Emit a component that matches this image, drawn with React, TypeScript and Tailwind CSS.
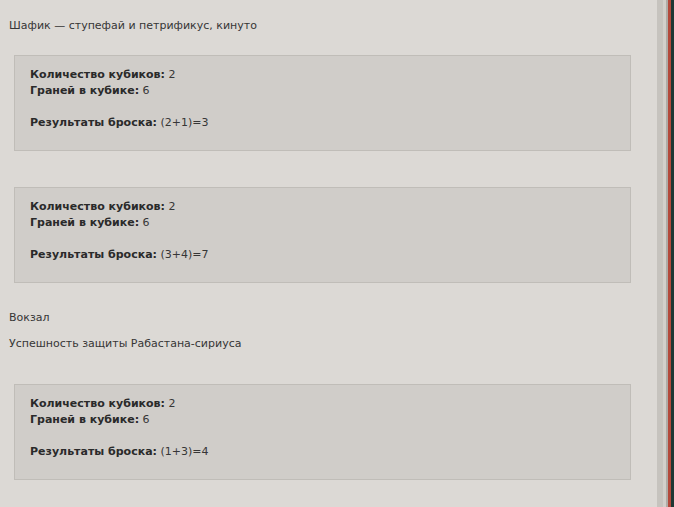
import React from "react";

type Roll = { dice: number; faces: number; result: string };

function RollBox({ roll, className }: { roll: Roll; className?: string }) {
  return (
    <div
      className={`ml-[14px] w-[617px] h-[96px] border border-[#c0bdb8] bg-[#d0cdc9] pl-[15px] pt-[11px] ${className ?? ""}`}
    >
      <div className="leading-[16px]">
        <b className="font-bold text-[#2a2a2a]">Количество кубиков:</b> {roll.dice}
      </div>
      <div className="leading-[16px]">
        <b className="font-bold text-[#2a2a2a]">Граней в кубике:</b> {roll.faces}
      </div>
      <div className="h-[16px]" />
      <div className="leading-[16px]">
        <b className="font-bold text-[#2a2a2a]">Результаты броска:</b> {roll.result}
      </div>
    </div>
  );
}

export default function App() {
  return (
    <div
      className="flex h-[507px] w-[674px] overflow-hidden bg-[#dcd9d5] text-[11px] text-[#363636]"
      style={{ fontFamily: '"DejaVu Sans", Verdana, sans-serif' }}
    >
      <div className="w-[657px] shrink-0">
        <p className="mt-[18px] pl-[9px] leading-[16px]">Шафик — ступефай и петрификус, кинуто</p>
        <RollBox className="mt-[21px]" roll={{ dice: 2, faces: 6, result: "(2+1)=3" }} />
        <RollBox className="mt-[36px]" roll={{ dice: 2, faces: 6, result: "(3+4)=7" }} />
        <p className="mt-[27px] pl-[9px] leading-[16px]">Вокзал</p>
        <p className="mt-[10px] pl-[9px] leading-[16px]">Успешность защиты Рабастана-сириуса</p>
        <RollBox className="mt-[32px]" roll={{ dice: 2, faces: 6, result: "(1+3)=4" }} />
      </div>
      <div className="flex shrink-0">
        <div className="w-[6px] bg-[#c6c3be]" />
        <div className="w-[3px] bg-[#d3d0cb]" />
        <div className="w-[2px] bg-[#afaca7]" />
        <div className="w-[3px] bg-[#b3493b]" />
        <div className="w-[3px] bg-[#1f3633]" />
      </div>
    </div>
  );
}
